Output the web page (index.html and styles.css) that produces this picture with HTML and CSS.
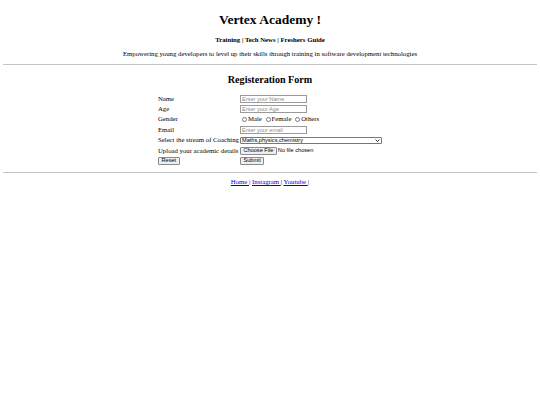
FILE: index.html
```html
<!DOCTYPE html>
<html lang="en">
<head>
<meta charset="utf-8">
<title>Vertex Academy</title>
<link rel="stylesheet" href="styles.css">
</head>
<body>
<header class="site-header">
  <h1 class="site-title">Vertex Academy !</h1>
  <h4 class="site-nav">Training | Tech News | Freshers Guide</h4>
  <p class="tagline">Empowering young developers to level up their skills through training in software development technologies</p>
</header>
<hr class="rule">
<main class="content">
  <h2 class="form-title">Registeration Form</h2>
  <form class="reg-form">
    <table class="form-table">
      <tr>
        <td class="label">Name</td>
        <td class="field"><input class="text-input" type="text" placeholder="Enter your Name"></td>
      </tr>
      <tr>
        <td class="label">Age</td>
        <td class="field"><input class="text-input" type="text" placeholder="Enter your Age"></td>
      </tr>
      <tr>
        <td class="label">Gender</td>
        <td class="field radios"><input class="radio" type="radio" name="g" id="m"><label for="m">Male</label> <input class="radio" type="radio" name="g" id="f"><label for="f">Female</label> <input class="radio" type="radio" name="g" id="o"><label for="o">Others</label></td>
      </tr>
      <tr>
        <td class="label">Email</td>
        <td class="field"><input class="text-input" type="email" placeholder="Enter your email"></td>
      </tr>
      <tr>
        <td class="label">Select the stream of Coaching</td>
        <td class="field">
          <span class="select-wrap">
            <select class="stream-select"><option>Maths,physics,chemistry</option><option>Biology,physics,chemistry</option></select>
            <svg class="select-arrow" viewBox="0 0 10 6" width="5" height="3"><path d="M1 1 L5 5 L9 1" fill="none" stroke="#222" stroke-width="1.8"/></svg>
          </span>
        </td>
      </tr>
      <tr>
        <td class="label">Upload your academic details</td>
        <td class="field"><span class="file-row"><button type="button" class="btn">Choose File</button><span class="file-status">No file chosen</span></span></td>
      </tr>
      <tr>
        <td class="label"><button type="reset" class="btn">Reset</button></td>
        <td class="field"><button type="submit" class="btn">Submit</button></td>
      </tr>
    </table>
  </form>
</main>
<hr class="rule">
<footer class="site-footer">
  <a href="#">Home </a>| <a href="#">Instagram </a>| <a href="#">Youtube </a>|
</footer>
</body>
</html>
```

FILE: styles.css
```css
html {
  background: #fff;
}
body {
  margin: 3.4px;
  font-family: "Liberation Serif", "Times New Roman", serif;
  font-size: 6.75px;
  line-height: 7.8px;
  color: #000;
}
.site-header {
  text-align: center;
}
.site-title {
  font-size: 13.5px;
  line-height: 15.6px;
  margin: 8.6px 0 8.4px;
}
.site-nav {
  font-size: 6.75px;
  line-height: 7.8px;
  margin: 0;
}
.tagline {
  margin: 6px 0 0;
  line-height: 7.8px;
}
.rule {
  margin: 6px 0 0;
  height: 0;
  border: 0;
  border-top: 1px solid #c4c4c4;
}
.content {
  display: block;
}
.form-title {
  text-align: center;
  font-size: 10.1px;
  line-height: 11.6px;
  margin: 9.6px 0 7.6px;
}
.form-table {
  margin: 0 auto 1px;
  border-spacing: 0;
}
.form-table td {
  padding: 0;
  height: 10.4px;
  vertical-align: middle;
  white-space: nowrap;
}
.label {
  width: 82px;
}
.text-input {
  box-sizing: border-box;
  width: 67px;
  height: 7.8px;
  margin: 0;
  padding: 0 1px;
  border: 1px solid #9a9a9a;
  font-family: "Liberation Sans", Arial, sans-serif;
  font-size: 5.6px;
  color: #000;
  background: #fff;
  vertical-align: middle;
}
.text-input::placeholder {
  color: #8a8a8a;
}
.radios {
  font-size: 6.75px;
}
.radio {
  box-sizing: border-box;
  appearance: none;
  width: 5px;
  height: 5px;
  margin: 0 1px 0 2px;
  border: 0.6px solid #777;
  border-radius: 50%;
  background: #fff;
  vertical-align: -0.5px;
}
.select-wrap {
  position: relative;
  display: inline-block;
  vertical-align: middle;
}
.stream-select {
  box-sizing: border-box;
  appearance: none;
  width: 142px;
  height: 7.6px;
  margin: 0;
  padding: 0 1px;
  border: 1px solid #777;
  border-radius: 1px;
  background: #fff;
  font-family: "Liberation Sans", Arial, sans-serif;
  font-size: 5.6px;
  line-height: 5.6px;
  color: #000;
  display: block;
}
.select-arrow {
  position: absolute;
  right: 2px;
  top: 2.3px;
  pointer-events: none;
}
.file-row {
  display: inline-flex;
  align-items: center;
  gap: 1px;
  vertical-align: middle;
}
.btn {
  box-sizing: border-box;
  height: 7.8px;
  margin: 0;
  padding: 0 2.5px;
  border: 0.8px solid #8a8a8a;
  border-radius: 1px;
  background: #efefef;
  font-family: "Liberation Sans", Arial, sans-serif;
  font-size: 5.6px;
  line-height: 5.6px;
  color: #000;
  vertical-align: middle;
}
.file-status {
  font-family: "Liberation Sans", Arial, sans-serif;
  font-size: 5.6px;
}
.site-footer {
  text-align: center;
  margin: 5px 0;
}
.site-footer a {
  color: #0000ee;
}
```
